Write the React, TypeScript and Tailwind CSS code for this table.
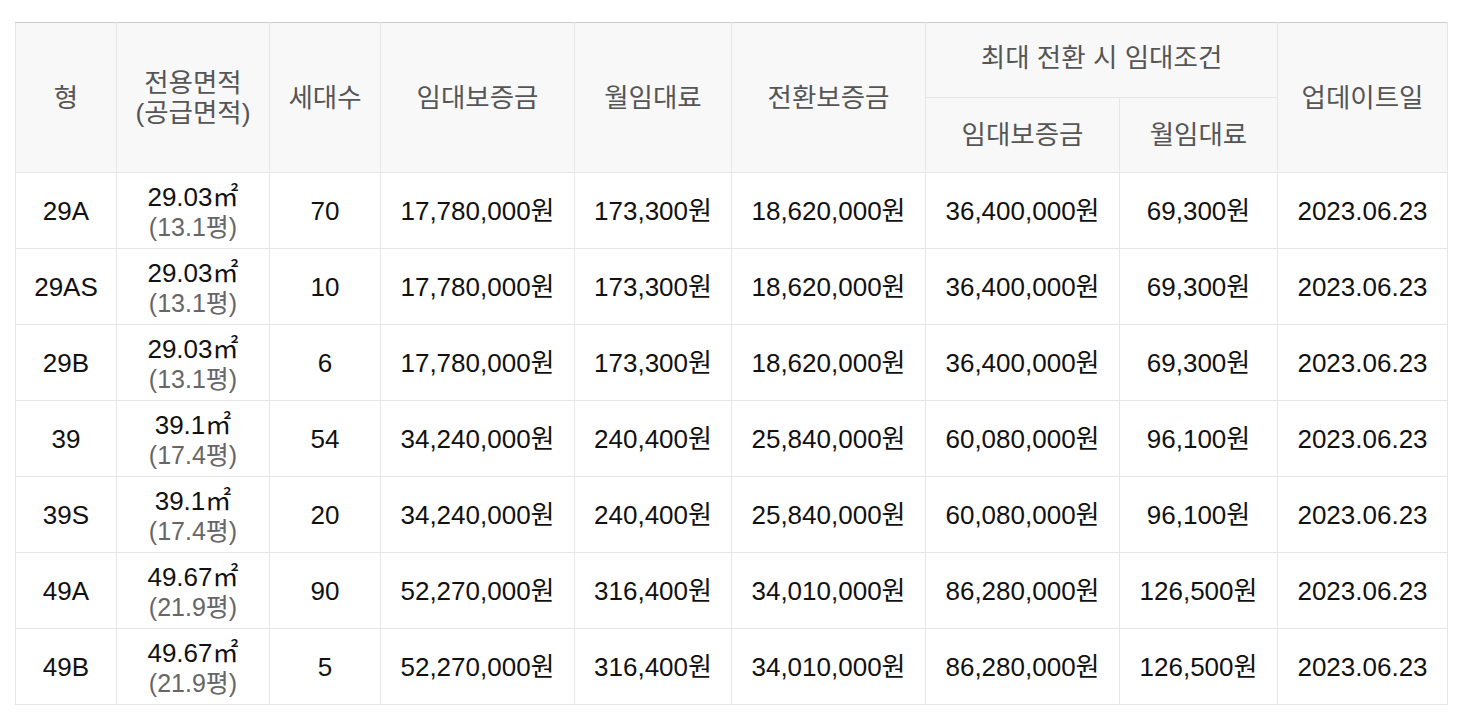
import React from "react";

type Row = {
  type: string;
  area: string;
  pyeong: string;
  units: string;
  deposit: string;
  rent: string;
  conv: string;
  maxDeposit: string;
  maxRent: string;
  date: string;
};

const rows: Row[] = [
  { type: "29A", area: "29.03", pyeong: "13.1", units: "70", deposit: "17,780,000원", rent: "173,300원", conv: "18,620,000원", maxDeposit: "36,400,000원", maxRent: "69,300원", date: "2023.06.23" },
  { type: "29AS", area: "29.03", pyeong: "13.1", units: "10", deposit: "17,780,000원", rent: "173,300원", conv: "18,620,000원", maxDeposit: "36,400,000원", maxRent: "69,300원", date: "2023.06.23" },
  { type: "29B", area: "29.03", pyeong: "13.1", units: "6", deposit: "17,780,000원", rent: "173,300원", conv: "18,620,000원", maxDeposit: "36,400,000원", maxRent: "69,300원", date: "2023.06.23" },
  { type: "39", area: "39.1", pyeong: "17.4", units: "54", deposit: "34,240,000원", rent: "240,400원", conv: "25,840,000원", maxDeposit: "60,080,000원", maxRent: "96,100원", date: "2023.06.23" },
  { type: "39S", area: "39.1", pyeong: "17.4", units: "20", deposit: "34,240,000원", rent: "240,400원", conv: "25,840,000원", maxDeposit: "60,080,000원", maxRent: "96,100원", date: "2023.06.23" },
  { type: "49A", area: "49.67", pyeong: "21.9", units: "90", deposit: "52,270,000원", rent: "316,400원", conv: "34,010,000원", maxDeposit: "86,280,000원", maxRent: "126,500원", date: "2023.06.23" },
  { type: "49B", area: "49.67", pyeong: "21.9", units: "5", deposit: "52,270,000원", rent: "316,400원", conv: "34,010,000원", maxDeposit: "86,280,000원", maxRent: "126,500원", date: "2023.06.23" },
];

const th = "border border-[#e6e6e6] bg-[#f8f8f8] font-normal text-[#555555] text-[26.5px] leading-[30px] text-center align-middle p-0";
const td = "border border-[#e6e6e6] text-[#111111] text-[26px] leading-[30px] text-center align-middle p-0";

export default function App() {
  return (
    <div
      className="min-h-[716px] bg-white pt-[22px] pl-[15px]"
      style={{ fontFamily: '"Liberation Sans", Arial, "Noto Sans CJK KR", sans-serif' }}
    >
      <table className="table-fixed border-collapse w-[1432px] border-t border-t-[#cccccc]">
        <colgroup>
          <col className="w-[101px]" />
          <col className="w-[153px]" />
          <col className="w-[111px]" />
          <col className="w-[194px]" />
          <col className="w-[157px]" />
          <col className="w-[194px]" />
          <col className="w-[194px]" />
          <col className="w-[158px]" />
          <col className="w-[170px]" />
        </colgroup>
        <thead>
          <tr className="h-[75px]">
            <th rowSpan={2} className={`${th} border-t-[#cccccc]`}>형</th>
            <th rowSpan={2} className={`${th} border-t-[#cccccc]`}>
              전용면적
              <br />
              (공급면적)
            </th>
            <th rowSpan={2} className={`${th} border-t-[#cccccc]`}>세대수</th>
            <th rowSpan={2} className={`${th} border-t-[#cccccc]`}>임대보증금</th>
            <th rowSpan={2} className={`${th} border-t-[#cccccc]`}>월임대료</th>
            <th rowSpan={2} className={`${th} border-t-[#cccccc]`}>전환보증금</th>
            <th colSpan={2} className={`${th} border-t-[#cccccc] pb-[4px]`}>최대 전환 시 임대조건</th>
            <th rowSpan={2} className={`${th} border-t-[#cccccc]`}>업데이트일</th>
          </tr>
          <tr className="h-[75px]">
            <th className={th}>임대보증금</th>
            <th className={th}>월임대료</th>
          </tr>
        </thead>
        <tbody>
          {rows.map((r) => (
            <tr key={r.type} className="h-[76px]">
              <td className={td}>{r.type}</td>
              <td className={td}>
                <div>
                  {r.area}
                  <span style={{ fontFamily: '"Noto Sans CJK KR", sans-serif' }}>㎡</span>
                </div>
                <div className="text-[25px] text-[#666666]">({r.pyeong}평)</div>
              </td>
              <td className={td}>{r.units}</td>
              <td className={td}>{r.deposit}</td>
              <td className={td}>{r.rent}</td>
              <td className={td}>{r.conv}</td>
              <td className={td}>{r.maxDeposit}</td>
              <td className={td}>{r.maxRent}</td>
              <td className={td}>{r.date}</td>
            </tr>
          ))}
        </tbody>
      </table>
    </div>
  );
}
